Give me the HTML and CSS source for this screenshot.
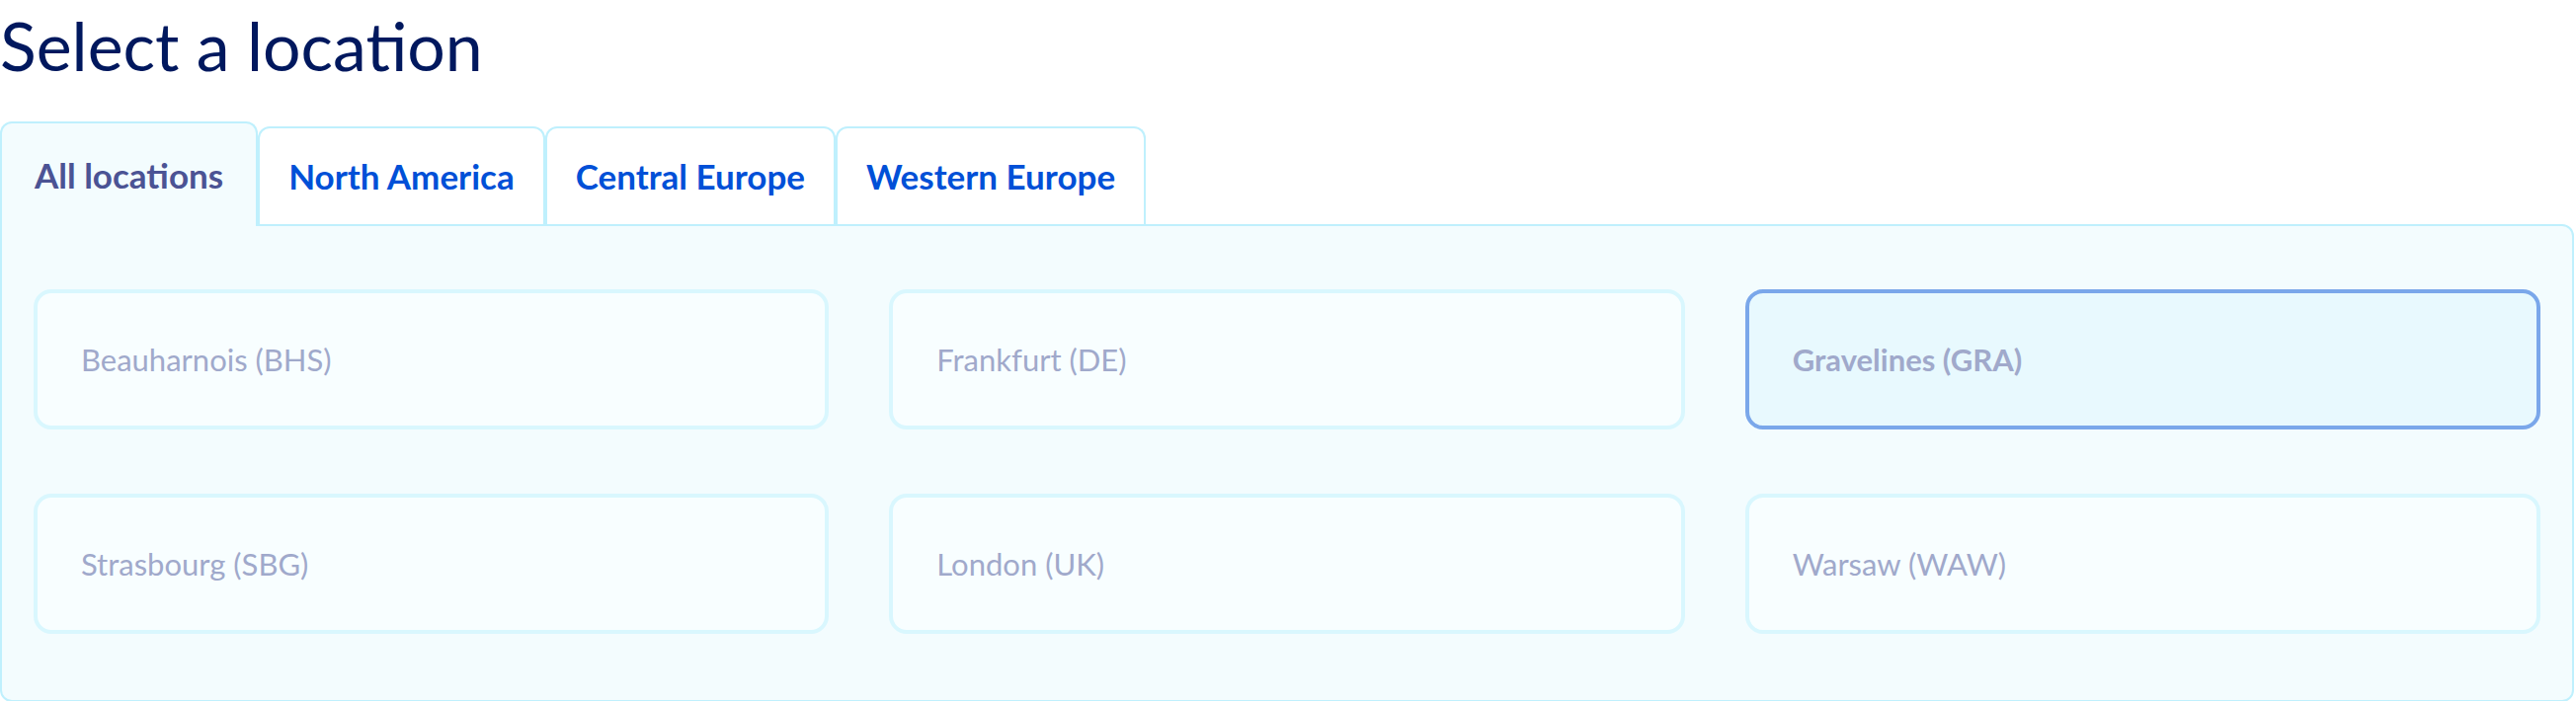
FILE: index.html
```html
<!DOCTYPE html>
<html lang="en">
<head>
<meta charset="utf-8">
<title>Select a location</title>
<link rel="stylesheet" href="styles.css">
</head>
<body>
<main class="page">
  <h1 class="title">Select a location</h1>
  <div class="tabs" role="tablist">
    <button class="tab tab-active" role="tab">All locations</button>
    <button class="tab" role="tab">North America</button>
    <button class="tab" role="tab">Central Europe</button>
    <button class="tab" role="tab">Western Europe</button>
  </div>
  <section class="panel">
    <div class="grid">
      <div class="card">Beauharnois (BHS)</div>
      <div class="card">Frankfurt (DE)</div>
      <div class="card card-selected">Gravelines (GRA)</div>
      <div class="card">Strasbourg (SBG)</div>
      <div class="card">London (UK)</div>
      <div class="card">Warsaw (WAW)</div>
    </div>
  </section>
</main>
</body>
</html>
```
FILE: styles.css
```css
html, body {
  margin: 0;
  padding: 0;
  background: #ffffff;
}

body {
  font-family: Lato, "Open Sans", sans-serif;
}

.page {
  width: 2606px;
}

.title {
  margin: 5px 0 0 0;
  font-size: 68px;
  font-weight: 400;
  line-height: 1.2;
  color: #00185e;
}

.tabs {
  display: flex;
  align-items: flex-end;
  margin-top: 36px;
  margin-bottom: -2px;
}

.tab {
  display: flex;
  align-items: center;
  justify-content: center;
  box-sizing: border-box;
  height: 99px;
  margin: 0 0 2px 0;
  padding: 0 29px;
  font-family: Lato, "Open Sans", sans-serif;
  font-size: 35px;
  font-weight: 700;
  line-height: 1.2;
  color: #0050d7;
  background: #ffffff;
  border: 2px solid #bff0fd;
  border-bottom: none;
  border-radius: 12px 12px 0 0;
  cursor: pointer;
}

.tab-active {
  position: relative;
  z-index: 1;
  height: 106px;
  margin-bottom: 0;
  padding: 0 33px;
  color: #4b5394;
  background: #f3fcfe;
}

.panel {
  box-sizing: border-box;
  background: #f3fcfe;
  border: 2px solid #bff0fd;
  border-radius: 0 12px 12px 12px;
  padding: 64px 32px 67px 32px;
}

.grid {
  display: grid;
  grid-template-columns: repeat(3, 1fr);
  column-gap: 61px;
  row-gap: 65px;
}

.card {
  box-sizing: border-box;
  height: 142px;
  display: flex;
  align-items: center;
  padding: 0 44px;
  background: #f8feff;
  border: 4px solid #d9f7fe;
  border-radius: 18px;
  font-size: 31px;
  font-weight: 400;
  color: #a0a9cb;
}

.card-selected {
  background: #e8f9fe;
  border-color: #7aa7ea;
  font-weight: 700;
}
```
